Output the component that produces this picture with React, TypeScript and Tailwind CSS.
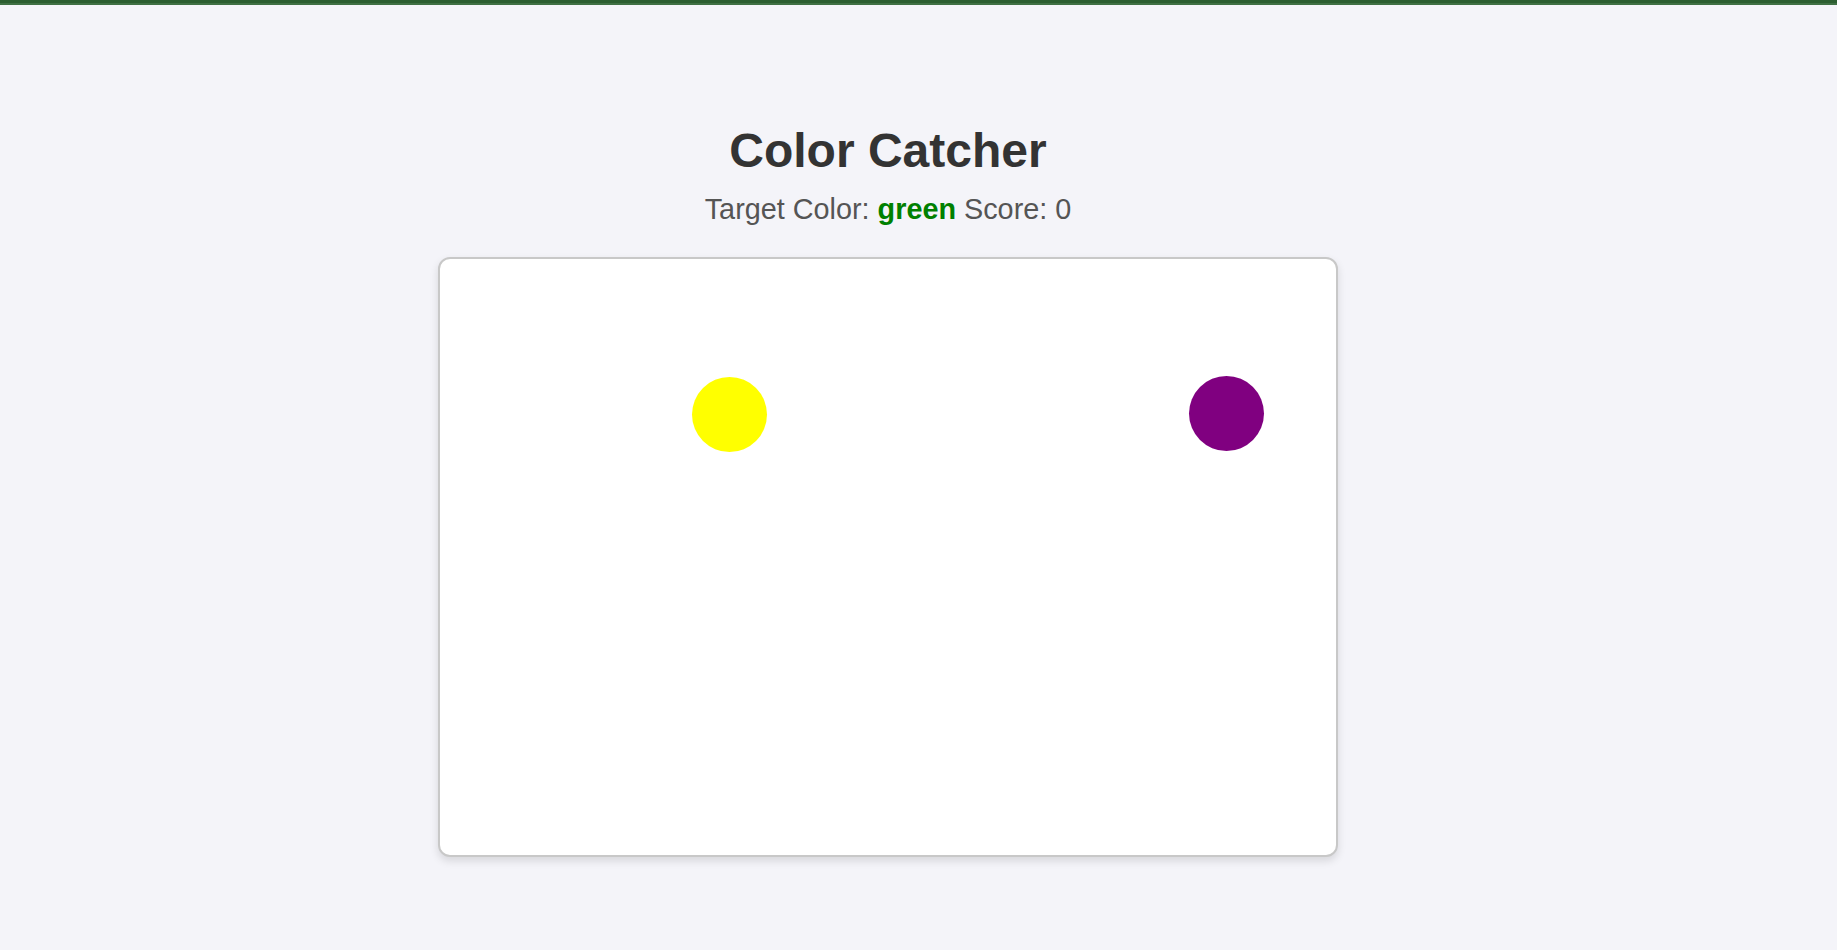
import React from "react";

interface Ball {
  color: string;
  x: number;
  y: number;
}

const balls: Ball[] = [
  { color: "#ffff00", x: 252, y: 118 },
  { color: "#800080", x: 749, y: 117 },
];

export default function App() {
  return (
    <div
      className="min-h-[950px] bg-[#f4f4f9]"
      style={{ fontFamily: '"Liberation Sans", Arial, sans-serif' }}
    >
      <div className="h-[3px] bg-[#2c5e31]" />
      <div className="h-[2px] bg-[#3f7044]" />
      <div className="flex w-[1776px] flex-col items-center pt-[118px]">
        <h1 className="text-[48px] font-bold leading-[56px] text-[#333333]">
          Color Catcher
        </h1>
        <p className="mt-[14px] text-[28.8px] leading-[33px] text-[#555555]">
          Target Color: <span className="font-bold text-[#008000]">green</span>{" "}
          Score: 0
        </p>
        <div className="relative mt-[31px] h-[600px] w-[900px] overflow-hidden rounded-[12px] border-2 border-[#c8c8c8] bg-white shadow-[0_4px_8px_rgba(0,0,0,0.12)]">
          {balls.map((b) => (
            <div
              key={b.color}
              className="absolute h-[75px] w-[75px] rounded-full"
              style={{ left: b.x, top: b.y, backgroundColor: b.color }}
            />
          ))}
        </div>
      </div>
    </div>
  );
}
